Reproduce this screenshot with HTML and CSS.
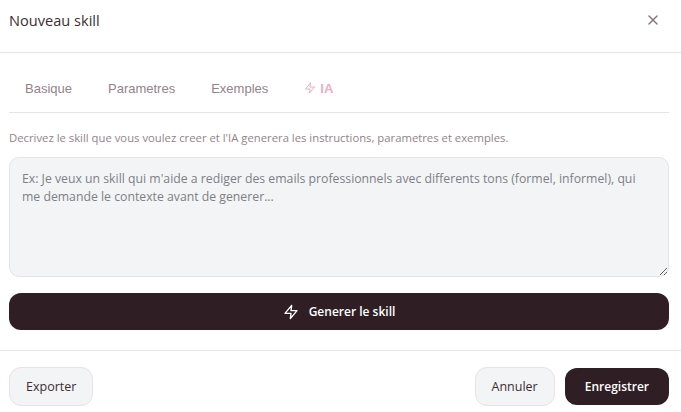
FILE: index.html
```html
<!DOCTYPE html>
<html>
<head>
    <title>Nouveau skill</title>
    <link rel="stylesheet" href="styles.css">
</head>
<body>
    <div class="header">
        <h1 class="title">Nouveau skill</h1>
        <button class="close" aria-label="Fermer">
            <svg width="16" height="16" viewBox="0 0 24 24" fill="none" stroke="currentColor" stroke-width="2" stroke-linecap="round" stroke-linejoin="round"><path d="M18 6 6 18"/><path d="m6 6 12 12"/></svg>
        </button>
    </div>
    <div class="content">
        <div class="tabs">
            <span class="tab">Basique</span>
            <span class="tab">Parametres</span>
            <span class="tab">Exemples</span>
            <span class="tab tab-ia">
                <svg width="12" height="12" viewBox="0 0 24 24" fill="none" stroke="currentColor" stroke-width="2" stroke-linecap="round" stroke-linejoin="round"><path d="M13 2 3 14h9l-1 8 10-12h-9l1-8z"/></svg>
                IA
            </span>
        </div>
        <p class="hint">Decrivez le skill que vous voulez creer et l'IA generera les instructions, parametres et exemples.</p>
        <textarea class="prompt" placeholder="Ex: Je veux un skill qui m'aide a rediger des emails professionnels avec differents tons (formel, informel), qui me demande le contexte avant de generer..."></textarea>
        <button class="generate">
            <svg width="16" height="16" viewBox="0 0 24 24" fill="none" stroke="currentColor" stroke-width="2" stroke-linecap="round" stroke-linejoin="round"><path d="M13 2 3 14h9l-1 8 10-12h-9l1-8z"/></svg>
            Generer le skill
        </button>
    </div>
    <div class="footer">
        <button class="btn">Exporter</button>
        <div class="actions">
            <button class="btn">Annuler</button>
            <button class="btn btn-dark">Enregistrer</button>
        </div>
    </div>
</body>
</html>
```

FILE: styles.css
```css
* {
    box-sizing: border-box;
}
html, body {
    height: 100%;
}
body {
    margin: 0;
    overflow: hidden;
    background-color: #ffffff;
    font-family: "Open Sans", "Noto Sans", sans-serif;
    color: #2f1f24;
}
button {
    font-family: inherit;
}
.header {
    height: 53px;
    padding: 0 20px 13px 9px;
    display: flex;
    align-items: center;
    justify-content: space-between;
    border-bottom: 1px solid #ece1e5;
}
.title {
    margin: 0;
    font-size: 14.6px;
    font-weight: 400;
    color: #3c2e33;
}
.close {
    display: flex;
    padding: 0;
    border: none;
    background: none;
    color: #84747a;
}
.content {
    padding: 0 12px 0 9px;
}
.tabs {
    display: flex;
    gap: 36px;
    height: 60px;
    padding: 11px 0 0 16px;
    align-items: center;
    border-bottom: 1px solid #ece1e5;
    font-family: "Liberation Sans", Arial, sans-serif;
    font-size: 13px;
}
.tab {
    color: #94838a;
}
.tab-ia {
    display: flex;
    align-items: center;
    gap: 4px;
    font-weight: 700;
    color: #eab0c2;
}
.hint {
    margin: 18px 0 0;
    font-size: 11.3px;
    line-height: 14px;
    color: #94838a;
}
.prompt {
    display: block;
    width: 100%;
    height: 120px;
    margin-top: 12px;
    padding: 12px 24px 12px 12px;
    border: 1px solid #e3e4e6;
    border-radius: 10px;
    background-color: #f3f4f6;
    font-family: inherit;
    font-size: 12.25px;
    line-height: 18px;
}
.prompt::placeholder {
    color: #7d7f85;
    opacity: 1;
}
.generate {
    width: 100%;
    height: 37px;
    margin-top: 16px;
    display: flex;
    align-items: center;
    justify-content: center;
    gap: 10px;
    border: none;
    border-radius: 12px;
    background-color: #2f1f24;
    color: #ffffff;
    font-size: 12px;
    font-weight: 600;
}
.footer {
    margin-top: 20px;
    padding: 16px 12px 0 9px;
    display: flex;
    justify-content: space-between;
    align-items: center;
    border-top: 1px solid #e7e7e7;
}
.actions {
    display: flex;
    align-items: center;
    gap: 10px;
}
.btn {
    height: 39px;
    padding: 0 16px;
    border: 1px solid #ece1e5;
    border-radius: 12px;
    background-color: #f3f4f6;
    color: #3c2e33;
    font-size: 12.5px;
}
.btn-dark {
    height: 37px;
    border: none;
    background-color: #2f1f24;
    color: #ffffff;
    font-size: 12px;
    font-weight: 600;
    padding: 0 20px;
}
```
